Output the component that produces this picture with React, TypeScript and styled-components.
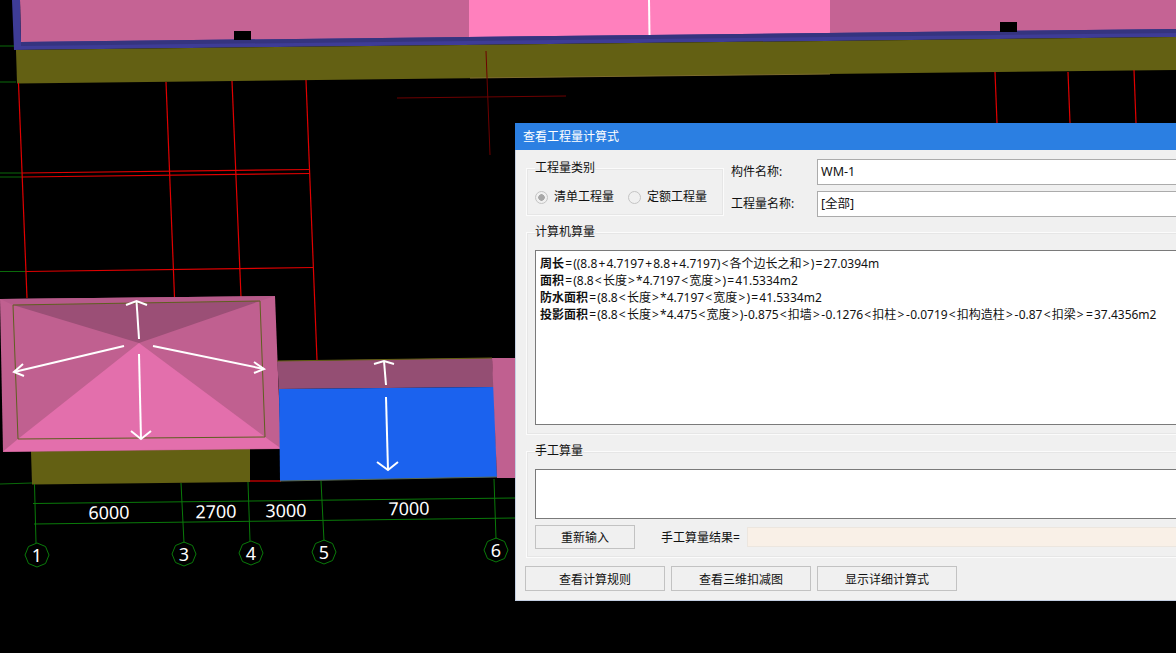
import * as React from 'react';
import styled, { createGlobalStyle } from 'styled-components';

const GlobalStyle = createGlobalStyle`
    html, body {
        margin: 0;
        padding: 0;
        background: #000;
    }
`;

const UI_FONT = `"Noto Sans", "Noto Sans CJK SC", sans-serif`;

const redLines = [
    '18.5,83 27,298',
    '166,82 174.5,297',
    '232,81 241,297',
    '306,80 317,360',
    '22,173 310,169.5',
    '22,177 310,173.5',
    '26,271.5 313,267.5',
    '250,481 281,481',
    '995,72 997,123',
    '1068,72 1070,123',
    '1134,70 1136,123',
];

const darkRedLines = ['486,51 490,155', '397,98 566,96'];

const greenStubs = ['0,46 14,46', '0,82 16,82', '0,173 22,173', '0,177 22,177', '0,271.5 26,271.5', '0,484 32,483'];

const dimensionLines = [
    '34.5,484 36,543',
    '181,483 184,543',
    '248,482 250,541',
    '321,481 324,541',
    '494,479 496,539',
    '33,503.5 515,498',
    '34,524 515,518',
];

const dimensionLabels = [
    { x: 109, y: 519, text: '6000' },
    { x: 216, y: 518, text: '2700' },
    { x: 286, y: 517, text: '3000' },
    { x: 409, y: 515, text: '7000' },
];

const axisMarks = [
    { x: 37, y: 555, text: '1' },
    { x: 184, y: 554, text: '3' },
    { x: 251, y: 553, text: '4' },
    { x: 324, y: 552, text: '5' },
    { x: 496, y: 550, text: '6' },
];

const arrows = [
    '139,339 136.5,301',
    '126,305 136.5,301 147,305',
    '124,346 14,372',
    '23,364 14,372 24,376',
    '153,346 264,369',
    '254,362 264,369 254,373',
    '139,354 141,439',
    '131,431 141,439 151,431',
    '386,385 384,361',
    '374,364 384,361 394,364',
    '386,397 388,470',
    '377,462 388,470 398,462',
];

const formulas = [
    { name: '周长', body: '=((8.8+4.7197+8.8+4.7197)<各个边长之和>)=27.0394m' },
    { name: '面积', body: '=(8.8<长度>*4.7197<宽度>)=41.5334m2' },
    { name: '防水面积', body: '=(8.8<长度>*4.7197<宽度>)=41.5334m2' },
    {
        name: '投影面积',
        body: '=(8.8<长度>*4.475<宽度>)-0.875<扣墙>-0.1276<扣柱>-0.0719<扣构造柱>-0.87<扣梁>=37.4356m2',
    },
];

const octagon = (cx: number, cy: number, r: number) =>
    Array.from({ length: 8 }, (_, i) => {
        const a = (i * Math.PI) / 4;
        return `${(cx + r * Math.cos(a)).toFixed(1)},${(cy + r * Math.sin(a)).toFixed(1)}`;
    }).join(' ');

// the symbols are wider in the original UI font
const spaceSymbols = (text: string) =>
    text.split(/([<>=+-])/).map((part, i) =>
        /^[<>=+]$/.test(part) ? (
            <WideSymbol key={i}>{part}</WideSymbol>
        ) : part === '-' ? (
            <Dash key={i}>{part}</Dash>
        ) : (
            part
        ),
    );

const CadDrawing: React.FC = () => (
    <CadSvg width={1176} height={653} viewBox='0 0 1176 653'>
        {/* upper slab */}
        <polygon points='20,0 1176,0 1176,30 21,43' fill='#c56394' />
        <polygon points='469,0 830,0 830,33 469,38' fill='#ff80bd' />
        <polygon points='12,0 20,0 21,42 1176,29 1176,37 14,50' fill='#3e3c96' />
        <polygon points='21,42 1176,29 1176,33 21,46' fill='#35347f' />
        <polygon points='16,50 1176,37 1176,70 17,83.5' fill='#636013' />
        <polyline points='470,78 830,74' fill='none' stroke='#7d6c2e' />
        <rect x={234} y={31} width={17} height={9} fill='#000' />
        <rect x={1000} y={22} width={17} height={10} fill='#000' />
        <line x1={649} y1={0} x2={649.5} y2={35} stroke='#fff' strokeWidth={2} />

        {greenStubs.map((p) => (
            <polyline key={p} points={p} fill='none' stroke='#0a6a0a' />
        ))}
        {redLines.map((p) => (
            <polyline key={p} points={p} fill='none' stroke='#e00000' strokeWidth={1.2} />
        ))}
        {darkRedLines.map((p) => (
            <polyline key={p} points={p} fill='none' stroke='#6e0000' />
        ))}

        {/* roof */}
        <polygon points='31,451 250,447 250,482 32,484.5' fill='#636013' />
        <polygon points='0,299 275,296 281,449 3,452' fill='#c06090' />
        <polygon points='0,299 275,296 260,301 13,305' fill='#b65a8a' />
        <polygon points='18,439 265,437 281,448.5 3,451.5' fill='#e36fac' />
        <polygon points='13,305 260,301 139,343' fill='#9b4f76' />
        <polygon points='18,439 265,437 139,343' fill='#e36fac' />
        <polygon points='13,305 260,301 265,437 18,439' fill='none' stroke='#5f5f20' />

        {/* wall */}
        <polygon points='277,361 492,358 494,387 279,389' fill='#944e73' />
        <polygon points='279,389 494,387 497,477 280,481' fill='#1b62ee' />
        <polygon points='492,358 516,358 516,478 497,478' fill='#c06090' />
        <polyline points='277,361 492,358' fill='none' stroke='#636013' />
        <polyline points='280,481 497,477' fill='none' stroke='#5a6a50' />

        {arrows.map((p) => (
            <polyline key={p} points={p} fill='none' stroke='#fff' strokeWidth={2} />
        ))}

        {dimensionLines.map((p) => (
            <polyline key={p} points={p} fill='none' stroke='#0a7a0a' />
        ))}
        {dimensionLabels.map((l) => (
            <CadText key={l.text} x={l.x} y={l.y} transform={`rotate(-0.7 ${l.x} ${l.y})`}>
                {l.text}
            </CadText>
        ))}
        {axisMarks.map((m) => (
            <g key={m.text}>
                <polygon points={octagon(m.x, m.y, 12)} fill='none' stroke='#0a7a0a' />
                <CadText x={m.x} y={m.y + 6.5}>
                    {m.text}
                </CadText>
            </g>
        ))}
    </CadSvg>
);

const App: React.FC = () => (
    <Desktop>
        <GlobalStyle />
        <CadDrawing />
        <Dialog>
            <TitleBar>查看工程量计算式</TitleBar>
            <DialogBody>
                <TopRow>
                    <TypeGroup>
                        <GroupTitle>工程量类别</GroupTitle>
                        <RadioRow>
                            <RadioItem>
                                <Radio $checked={true} />
                                清单工程量
                            </RadioItem>
                            <RadioItem>
                                <Radio />
                                定额工程量
                            </RadioItem>
                        </RadioRow>
                    </TypeGroup>
                    <FieldColumn>
                        <FieldRow>
                            <FieldLabel>构件名称:</FieldLabel>
                            <FieldValue>WM-1</FieldValue>
                        </FieldRow>
                        <FieldRow>
                            <FieldLabel>工程量名称:</FieldLabel>
                            <FieldValue>[全部]</FieldValue>
                        </FieldRow>
                    </FieldColumn>
                </TopRow>
                <Group>
                    <GroupTitle>计算机算量</GroupTitle>
                    <FormulaBox>
                        {formulas.map((f) => (
                            <div key={f.name}>
                                <b>{f.name}</b>
                                {spaceSymbols(f.body)}
                            </div>
                        ))}
                    </FormulaBox>
                </Group>
                <ManualGroup>
                    <GroupTitle>手工算量</GroupTitle>
                    <ManualBox />
                    <ManualRow>
                        <ActionButton $width={100} $height={24}>
                            重新输入
                        </ActionButton>
                        <ResultLabel>手工算量结果=</ResultLabel>
                        <ResultField />
                    </ManualRow>
                </ManualGroup>
                <ButtonRow>
                    <ActionButton $width={140} $height={25}>
                        查看计算规则
                    </ActionButton>
                    <ActionButton $width={140} $height={25}>
                        查看三维扣减图
                    </ActionButton>
                    <ActionButton $width={140} $height={25}>
                        显示详细计算式
                    </ActionButton>
                </ButtonRow>
            </DialogBody>
        </Dialog>
    </Desktop>
);

const Desktop = styled.div`
    position: relative;
    width: 1176px;
    height: 653px;
    overflow: hidden;
    background: #000;
    font-family: ${UI_FONT};
`;

const CadSvg = styled.svg`
    display: block;
`;

const CadText = styled.text`
    fill: #fff;
    font-family: 'Noto Sans', sans-serif;
    font-size: 18px;
    text-anchor: middle;
`;

const Dialog = styled.div`
    position: absolute;
    left: 515px;
    top: 123px;
    width: 720px;
    background: #f0f0f0;
    border-left: 1px solid #c4cfe2;
    border-bottom: 1px solid #c4cfe2;
    box-sizing: border-box;
    color: #111;
    font-size: 12px;
`;

const TitleBar = styled.div`
    height: 27px;
    margin-left: -1px;
    padding-left: 8px;
    background: #2b7fe2;
    color: #fff;
    font-size: 12px;
    line-height: 27px;
`;

const DialogBody = styled.div`
    display: flex;
    flex-direction: column;
    padding: 9px 0 9px 9px;
`;

const TopRow = styled.div`
    display: flex;
    gap: 7px;
    margin-left: 1px;
`;

const Group = styled.fieldset`
    min-width: 0;
    margin: 7px 0 0 1px;
    padding: 10px 8px 9px;
    border: 1px solid #fbfbfb;
    box-shadow: 0 0 0 1px #e6e6e6 inset;
`;

const TypeGroup = styled(Group)`
    width: 198px;
    height: 56px;
    box-sizing: border-box;
    margin: 1px 0 0;
    padding: 0 0 0 8px;
`;

const ManualGroup = styled(Group)`
    margin-top: 8px;
    padding-bottom: 8px;
`;

const GroupTitle = styled.legend`
    padding: 0 1px 0 0;
    font-size: 12px;
    line-height: 16px;
`;

const RadioRow = styled.div`
    display: flex;
    gap: 14px;
    margin-top: 13px;
`;

const RadioItem = styled.div`
    display: flex;
    align-items: center;
    gap: 6px;
    line-height: 16px;
`;

const Radio = styled.span<{ $checked?: boolean }>`
    width: 13px;
    height: 13px;
    box-sizing: border-box;
    border: 1px solid #c4c4c4;
    border-radius: 50%;
    background: ${(p) => (p.$checked ? 'radial-gradient(circle, #a8a8a8 0 3px, #f0f0f0 3.5px)' : '#f0f0f0')};
`;

const FieldColumn = styled.div`
    display: flex;
    flex-direction: column;
    gap: 6px;
    flex: 1;
`;

const FieldRow = styled.div`
    display: flex;
    align-items: center;
`;

const FieldLabel = styled.div`
    width: 86px;
    padding-bottom: 2px;
    font-size: 12px;
`;

const FieldValue = styled.div`
    flex: 1;
    height: 26px;
    box-sizing: border-box;
    padding-left: 3px;
    background: #fff;
    border: 1px solid #ababab;
    font-size: 12.5px;
    line-height: 24px;
`;

const FormulaBox = styled.div`
    height: 175px;
    box-sizing: border-box;
    padding: 4px 0 0 4px;
    background: #fff;
    border: 1px solid #7a7a7a;
    font-size: 12px;
    line-height: 17px;
    white-space: nowrap;

    b {
        font-weight: 700;
    }
`;

const WideSymbol = styled.span`
    padding: 0 1.15px;
`;

const Dash = styled.span`
    padding: 0 0.4px;
`;

const ManualBox = styled.div`
    height: 50px;
    box-sizing: border-box;
    background: #fff;
    border: 1px solid #7a7a7a;
`;

const ManualRow = styled.div`
    display: flex;
    align-items: center;
    margin-top: 6px;
`;

const ActionButton = styled.button<{ $width: number; $height: number }>`
    width: ${(p) => p.$width}px;
    height: ${(p) => p.$height}px;
    flex: none;
    padding: 0;
    background: #f0f0f0;
    border: 1px solid #c2c2c2;
    border-radius: 0;
    color: #111;
    font-family: ${UI_FONT};
    font-size: 12px;
`;

const ResultLabel = styled.div`
    margin-left: 26px;
    width: 86px;
    flex: none;
`;

const ResultField = styled.div`
    flex: 1;
    height: 20px;
    box-sizing: border-box;
    background: #f9f0e7;
    border: 1px solid #ece6df;
`;

const ButtonRow = styled.div`
    display: flex;
    gap: 6px;
    margin-top: 8px;
`;

export default App;
